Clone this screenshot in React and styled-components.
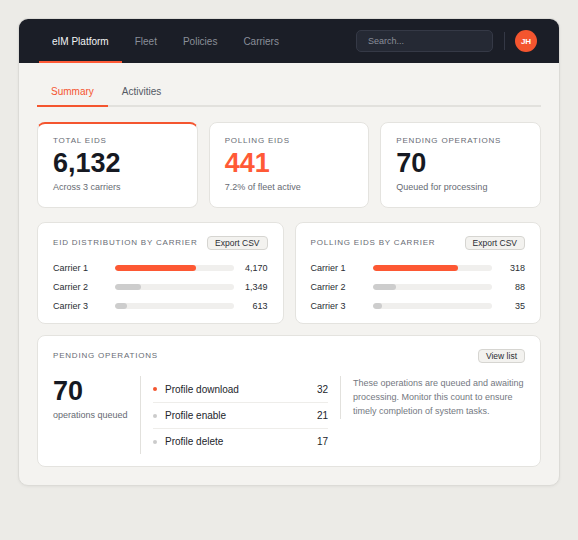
import React from "react";
import styled, { createGlobalStyle } from "styled-components";

const GlobalStyle = createGlobalStyle`
  body {
    margin: 0;
    background: #ecebe7;
    font-family: "Liberation Sans", Arial, sans-serif;
  }
`;

const Page = styled.div`
  padding: 18px;
`;

const Frame = styled.div`
  width: 540px;
  background: #f4f3f0;
  border: 1px solid #dcdbd7;
  border-radius: 10px;
  overflow: hidden;
  box-shadow: 0 1px 3px rgba(0, 0, 0, 0.05);
`;

const TopBar = styled.div`
  height: 44px;
  background: #1b1e27;
  display: flex;
  align-items: stretch;
  padding: 0 22px 0 20px;
`;

const Nav = styled.div`
  display: flex;
  align-items: stretch;
`;

const NavItem = styled.div`
  display: flex;
  align-items: center;
  padding: 2px 13px 0;
  font-size: 10px;
  color: ${(p) => (p.$active ? "#f2f3f5" : "#8a8e99")};
  border-bottom: 2px solid ${(p) => (p.$active ? "#ff5a36" : "transparent")};
`;

const TopRight = styled.div`
  margin-left: auto;
  display: flex;
  align-items: center;
`;

const Search = styled.div`
  box-sizing: border-box;
  width: 137px;
  height: 22px;
  background: #252934;
  border: 1px solid #353946;
  border-radius: 5px;
  padding: 0 11px;
  display: flex;
  align-items: center;
  font-size: 9px;
  color: #8a8e99;
`;

const VDivider = styled.div`
  width: 1px;
  height: 18px;
  background: #343845;
  margin: 0 10px 0 11px;
`;

const Avatar = styled.div`
  width: 22px;
  height: 22px;
  border-radius: 50%;
  background: #f4552f;
  color: #fff;
  font-size: 8px;
  font-weight: 700;
  display: flex;
  align-items: center;
  justify-content: center;
`;

const Content = styled.div`
  padding: 17px 18px 18px;
`;

const Tabs = styled.div`
  display: flex;
  border-bottom: 2px solid #e2e1dd;
  margin-bottom: 15px;
`;

const Tab = styled.div`
  padding: 6px 14px 7px;
  font-size: 10px;
  line-height: 12px;
  color: ${(p) => (p.$active ? "#f4552f" : "#555a64")};
  border-bottom: 2px solid ${(p) => (p.$active ? "#f4552f" : "transparent")};
  margin-bottom: -2px;
`;

const StatGrid = styled.div`
  display: grid;
  grid-template-columns: repeat(3, 1fr);
  gap: 11px;
  margin-bottom: 14px;
`;

const Card = styled.div`
  background: #fff;
  border: 1px solid #e4e3df;
  border-radius: 8px;
  padding: ${(p) => p.$pad || "13px 15px 14px"};
  ${(p) => p.$accent && "border-top: 2px solid #f4552f; padding-top: 12px;"}
`;

const Label = styled.div`
  font-size: 8px;
  line-height: 10px;
  letter-spacing: 0.8px;
  text-transform: uppercase;
  color: #686c74;
`;

const BigNumber = styled.div`
  font-size: 27px;
  font-weight: 700;
  line-height: 30px;
  margin-top: ${(p) => p.$mt || "2px"};
  color: ${(p) => (p.$orange ? "#ff5a36" : "#161922")};
`;

const Sub = styled.div`
  font-size: 9px;
  line-height: 12px;
  color: #666a72;
  margin-top: 3px;
  white-space: nowrap;
`;

const TwoGrid = styled.div`
  display: grid;
  grid-template-columns: 1fr 1fr;
  gap: 11px;
  margin-bottom: 11px;
`;

const CardHead = styled.div`
  display: flex;
  align-items: center;
  justify-content: space-between;
  margin-bottom: ${(p) => p.$mb || "8px"};
`;

const Button = styled.div`
  font-size: 8.5px;
  line-height: 12px;
  color: #2a2d33;
  background: #f3f2ef;
  border: 1px solid #d6d5d1;
  border-radius: 4px;
  padding: 0 7px;
`;

const BarRow = styled.div`
  display: grid;
  grid-template-columns: 62px 119px 1fr;
  align-items: center;
  height: 19px;
  font-size: 9px;
  color: #2a2d33;
`;

const Track = styled.div`
  height: 6px;
  border-radius: 3px;
  background: #f0efed;
  overflow: hidden;
`;

const Fill = styled.div`
  height: 100%;
  border-radius: 3px;
  background: ${(p) => (p.$primary ? "#fd5833" : "#cdcdcd")};
`;

const Value = styled.div`
  text-align: right;
`;

const PendingBody = styled.div`
  display: grid;
  grid-template-columns: 75px 188px 1fr;
  column-gap: 12px;
  align-items: start;
`;

const OpList = styled.div`
  border-left: 1px solid #e2e1dd;
  padding-left: 12px;
`;

const OpRow = styled.div`
  box-sizing: border-box;
  display: flex;
  align-items: center;
  height: 26px;
  font-size: 10px;
  color: #22252b;
  & + & {
    border-top: 1px solid #eeedea;
  }
`;

const Dot = styled.span`
  width: 4px;
  height: 4px;
  border-radius: 50%;
  background: ${(p) => (p.$active ? "#f4552f" : "#cbcbcb")};
  margin-right: 8px;
`;

const OpCount = styled.span`
  margin-left: auto;
`;

const Note = styled.div`
  border-left: 1px solid #e2e1dd;
  padding: 0 0 1px 12px;
  font-size: 9px;
  line-height: 14px;
  color: #74787f;
`;

const distribution = [
  { name: "Carrier 1", value: 4170 },
  { name: "Carrier 2", value: 1349 },
  { name: "Carrier 3", value: 613 },
];

const polling = [
  { name: "Carrier 1", value: 318 },
  { name: "Carrier 2", value: 88 },
  { name: "Carrier 3", value: 35 },
];

const BarCard = ({ title, rows, total }) => (
  <Card $pad="13px 15px 8px">
    <CardHead>
      <Label>{title}</Label>
      <Button>Export CSV</Button>
    </CardHead>
    {rows.map((r, i) => (
      <BarRow key={r.name}>
        <span>{r.name}</span>
        <Track>
          <Fill $primary={i === 0} style={{ width: `${(r.value / total) * 100}%` }} />
        </Track>
        <Value>{r.value.toLocaleString("en-US")}</Value>
      </BarRow>
    ))}
  </Card>
);

export default function App() {
  return (
    <Page>
      <GlobalStyle />
      <Frame>
        <TopBar>
          <Nav>
            <NavItem $active>eIM Platform</NavItem>
            <NavItem>Fleet</NavItem>
            <NavItem>Policies</NavItem>
            <NavItem>Carriers</NavItem>
          </Nav>
          <TopRight>
            <Search>Search...</Search>
            <VDivider />
            <Avatar>JH</Avatar>
          </TopRight>
        </TopBar>
        <Content>
          <Tabs>
            <Tab $active>Summary</Tab>
            <Tab>Activities</Tab>
          </Tabs>
          <StatGrid>
            <Card $accent>
              <Label>Total EIDs</Label>
              <BigNumber>6,132</BigNumber>
              <Sub>Across 3 carriers</Sub>
            </Card>
            <Card>
              <Label>Polling EIDs</Label>
              <BigNumber $orange>441</BigNumber>
              <Sub>7.2% of fleet active</Sub>
            </Card>
            <Card>
              <Label>Pending Operations</Label>
              <BigNumber>70</BigNumber>
              <Sub>Queued for processing</Sub>
            </Card>
          </StatGrid>
          <TwoGrid>
            <BarCard title="EID distribution by carrier" rows={distribution} total={6132} />
            <BarCard title="Polling EIDs by carrier" rows={polling} total={441} />
          </TwoGrid>
          <Card $pad="13px 15px 12px">
            <CardHead $mb="13px">
              <Label>Pending Operations</Label>
              <Button>View list</Button>
            </CardHead>
            <PendingBody>
              <div>
                <BigNumber $mt="0">70</BigNumber>
                <Sub>operations queued</Sub>
              </div>
              <OpList>
                <OpRow>
                  <Dot $active />
                  Profile download
                  <OpCount>32</OpCount>
                </OpRow>
                <OpRow>
                  <Dot />
                  Profile enable
                  <OpCount>21</OpCount>
                </OpRow>
                <OpRow>
                  <Dot />
                  Profile delete
                  <OpCount>17</OpCount>
                </OpRow>
              </OpList>
              <Note>
                These operations are queued and awaiting processing. Monitor this count to ensure
                timely completion of system tasks.
              </Note>
            </PendingBody>
          </Card>
        </Content>
      </Frame>
    </Page>
  );
}
